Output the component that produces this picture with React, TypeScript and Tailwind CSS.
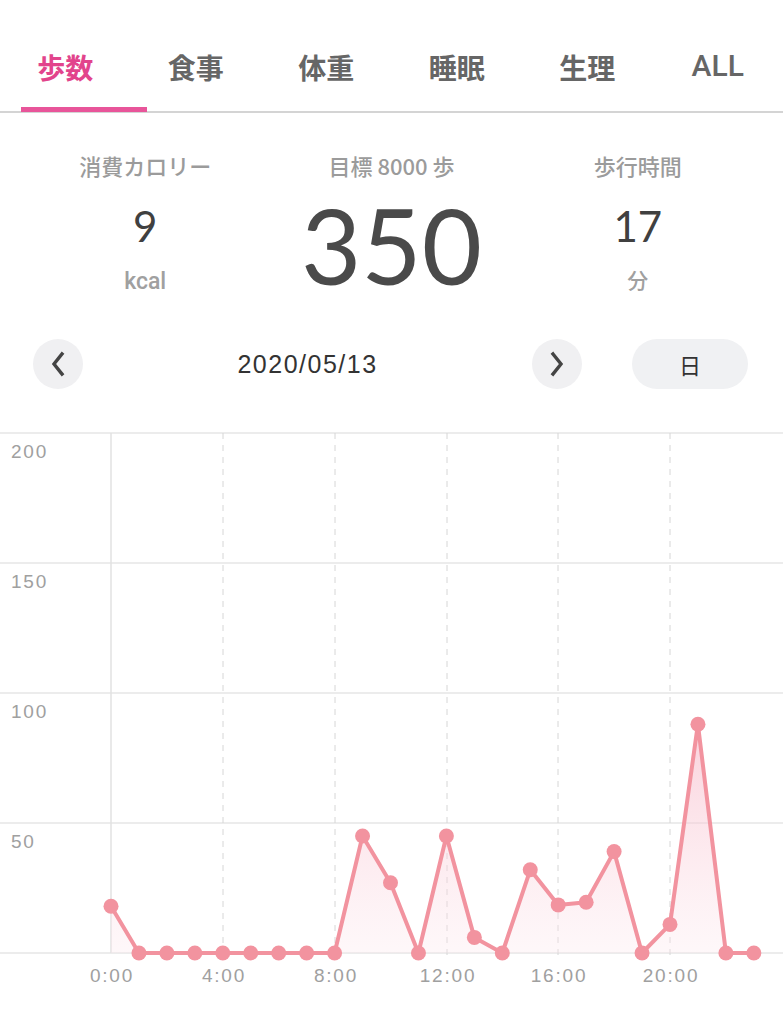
import React from "react";

const tabs = ["歩数", "食事", "体重", "睡眠", "生理", "ALL"];

// steps per hour, 0:00 - 23:00
const steps = [18, 0, 0, 0, 0, 0, 0, 0, 0, 45, 27, 0, 45, 6, 0, 32, 18.5, 19.5, 39, 0, 11, 88, 0, 0];

function Chart() {
  const x0 = 111;
  const step = 27.95;
  const base = 953;
  const k = 2.6;
  const pts = steps.map((v, i) => [x0 + i * step, base - v * k]);
  const line = pts.map((p, i) => (i === 0 ? "M" : "L") + p[0].toFixed(1) + " " + p[1].toFixed(1)).join(" ");
  const area = line + ` L${pts[pts.length - 1][0].toFixed(1)} ${base} L${x0} ${base} Z`;
  const rows = [
    { y: 433, label: "200" },
    { y: 563, label: "150" },
    { y: 693, label: "100" },
    { y: 823, label: "50" },
    { y: 953, label: "" },
  ];
  const cols = [
    { x: 111, label: "0:00" },
    { x: 223, label: "4:00" },
    { x: 335, label: "8:00" },
    { x: 447, label: "12:00" },
    { x: 558, label: "16:00" },
    { x: 670, label: "20:00" },
  ];
  return (
    <svg width="783" height="604" viewBox="0 420 783 604" className="block">
      <defs>
        <linearGradient id="fill" x1="0" y1="0" x2="0" y2="1">
          <stop offset="0%" stopColor="#f7b2c3" stopOpacity="0.6" />
          <stop offset="100%" stopColor="#fce6ec" stopOpacity="0.3" />
        </linearGradient>
      </defs>
      {rows.map((r) => (
        <line key={r.y} x1="0" x2="783" y1={r.y} y2={r.y} stroke="#e6e6e6" strokeWidth="1.5" />
      ))}
      {cols.map((c, i) =>
        i === 0 ? (
          <line key={c.x} x1={c.x} x2={c.x} y1="433" y2="953" stroke="#e2e2e2" strokeWidth="1.5" />
        ) : (
          <line key={c.x} x1={c.x} x2={c.x} y1="433" y2="960" stroke="#d6d6d6" strokeWidth="1" strokeDasharray="6 6" />
        )
      )}
      {rows.map((r) =>
        r.label ? (
          <text key={r.label} x="11" y={r.y + 25} fontSize="19" letterSpacing="1.8" fill="#a0a0a0" fontFamily="'Liberation Sans', sans-serif">
            {r.label}
          </text>
        ) : null
      )}
      {cols.map((c) => (
        <text key={c.label} x={c.x + 1} y="982" fontSize="19" letterSpacing="1.8" fill="#a0a0a0" textAnchor="middle" fontFamily="'Liberation Sans', sans-serif">
          {c.label}
        </text>
      ))}
      <path d={area} fill="url(#fill)" />
      <path d={line} fill="none" stroke="#f2939f" strokeWidth="4" strokeLinejoin="round" />
      {pts.map((p, i) => (
        <circle key={i} cx={p[0]} cy={p[1]} r="7.5" fill="#f2939f" />
      ))}
    </svg>
  );
}

function Chevron({ dir }: { dir: "left" | "right" }) {
  return (
    <svg width="24" height="28" viewBox="0 0 24 28" fill="none" stroke="#444444" strokeWidth="3.4" strokeLinecap="square" strokeLinejoin="miter">
      <path d={dir === "left" ? "M16 4 L8 14 L16 24" : "M8 4 L16 14 L8 24"} />
    </svg>
  );
}

export default function App() {
  return (
    <div className="w-[783px] h-[1024px] bg-white overflow-hidden font-['Noto_Sans_CJK_JP','Noto_Sans',sans-serif]">
      {/* タブ */}
      <div className="relative h-[113px] flex border-b-[2px] border-[#d4d4d4]">
        {tabs.map((t, i) => (
          <div
            key={t}
            className={
              i === 0
                ? "flex-1 flex justify-center pt-[47px] text-[28px] leading-[40px] text-[#e2448c] font-bold"
                : t === "ALL"
                ? "flex-1 flex justify-center pt-[46px] text-[30px] leading-[40px] text-[#666666] font-medium font-['Roboto',sans-serif]"
                : "flex-1 flex justify-center pt-[47px] text-[28px] leading-[40px] text-[#666666] font-bold"
            }
          >
            {t}
          </div>
        ))}
        <div className="absolute left-[21px] bottom-[-1px] w-[126px] h-[5px] bg-[#e8559a]" />
      </div>

      {/* 集計 */}
      <div className="h-[226px] grid grid-cols-3 px-[22px] pt-[37px]">
        <div className="flex flex-col items-center">
          <div className="text-[22px] leading-[30px] text-[#9b9b9b] font-medium">消費カロリー</div>
          <div className="mt-[22px] text-[42px] leading-[48px] text-[#404040] font-['Lato',sans-serif]">9</div>
          <div className="mt-[18px] text-[23px] leading-[28px] text-[#a0a0a0] font-medium font-['Roboto',sans-serif]">kcal</div>
        </div>
        <div className="flex flex-col items-center">
          <div className="text-[22px] leading-[30px] text-[#9b9b9b] font-medium">目標 8000 歩</div>
          <div className="mt-[13px] text-[104px] leading-[104px] text-[#4a4a4a] font-['Lato',sans-serif]">350</div>
        </div>
        <div className="flex flex-col items-center">
          <div className="text-[22px] leading-[30px] text-[#9b9b9b] font-medium">歩行時間</div>
          <div className="mt-[22px] text-[42px] leading-[48px] text-[#404040] font-['Lato',sans-serif]">17</div>
          <div className="mt-[15px] text-[21px] leading-[28px] text-[#a0a0a0] font-medium">分</div>
        </div>
      </div>

      {/* 日付 */}
      <div className="h-[50px] flex items-center pl-[33px] pr-[35px]">
        <button className="w-[50px] h-[50px] rounded-full bg-[#f0f0f2] flex items-center justify-center">
          <Chevron dir="left" />
        </button>
        <div className="flex-1 text-center pt-[2px] text-[25px] tracking-[1.5px] text-[#333333] font-['Liberation_Sans',sans-serif]">
          2020/05/13
        </div>
        <button className="w-[50px] h-[50px] rounded-full bg-[#f0f0f2] flex items-center justify-center">
          <Chevron dir="right" />
        </button>
        <button className="ml-[50px] w-[116px] h-[50px] rounded-full bg-[#f0f1f3] text-[22px] text-[#333333]">
          日
        </button>
      </div>

      <div className="mt-[31px]">
        <Chart />
      </div>
    </div>
  );
}
